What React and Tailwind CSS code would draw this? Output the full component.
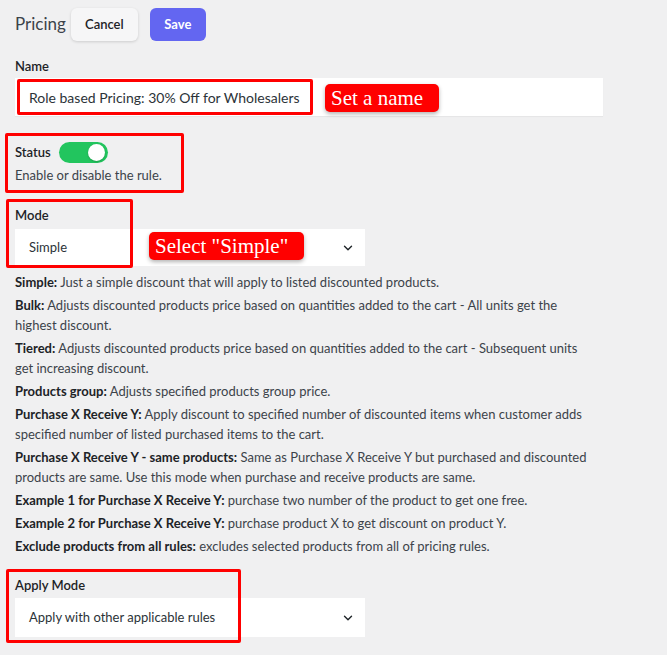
import React from "react";

const Chevron = () => (
  <svg width="14" height="14" viewBox="0 0 24 24" fill="none" stroke="#1d2327" strokeWidth="2.4" strokeLinecap="round" strokeLinejoin="round">
    <path d="M6 9l6 6 6-6" />
  </svg>
);

const Tag = ({ children, className }) => (
  <div className={"absolute bg-[#ff0000] text-white rounded-[5px] shadow-[0_2px_4px_rgba(0,0,0,0.3)] pl-[6px] pr-[16px] text-[21px] leading-[28px] [font-family:'Liberation_Serif',serif] " + className}>
    {children}
  </div>
);

const Box = ({ className }) => (
  <div className={"absolute border-[3px] border-[#ff0000] rounded-[2px] pointer-events-none " + className} />
);

const descs = [
  ["Simple:", " Just a simple discount that will apply to listed discounted products."],
  ["Bulk:", " Adjusts discounted products price based on quantities added to the cart - All units get the highest discount."],
  ["Tiered:", " Adjusts discounted products price based on quantities added to the cart - Subsequent units get increasing discount."],
  ["Products group:", " Adjusts specified products group price."],
  ["Purchase X Receive Y:", " Apply discount to specified number of discounted items when customer adds specified number of listed purchased items to the cart."],
  ["Purchase X Receive Y - same products:", " Same as Purchase X Receive Y but purchased and discounted products are same. Use this mode when purchase and receive products are same."],
  ["Example 1 for Purchase X Receive Y:", " purchase two number of the product to get one free."],
  ["Example 2 for Purchase X Receive Y:", " purchase product X to get discount on product Y."],
  ["Exclude products from all rules:", " excludes selected products from all of pricing rules."],
];

export default function App() {
  return (
    <div className="min-h-[655px] w-[667px] bg-[#f0f0f1] text-[#3c434a] [font-family:Lato,'Liberation_Sans',sans-serif] text-[13px] pl-[15px] pt-[8px] overflow-hidden">
      {/* header */}
      <div className="flex items-center h-[33px]">
        <span className="text-[17px] text-[#3c434a] mr-[5px] -mt-[2px]">Pricing</span>
        <button className="h-[33px] w-[67px] rounded-[6px] bg-[#f6f6f7] shadow-[0_1px_3px_rgba(0,0,0,0.15)] text-[13px] font-semibold text-[#1d2327]">Cancel</button>
        <button className="ml-[12px] h-[33px] w-[56px] rounded-[6px] bg-[#6366f1] text-[13px] font-bold text-white">Save</button>
      </div>

      {/* name */}
      <div className="mt-[16px] font-semibold text-[#1d2327] leading-[18px]">Name</div>
      <div className="relative mt-[3px] w-[588px] h-[38px] bg-white flex items-center pl-[14px] text-[14px] text-[#2c3338] shadow-[0_1px_1px_rgba(0,0,0,0.04)]">
        Role based Pricing: 30% Off for Wholesalers
        <Box className="left-[2px] top-[1px] w-[296px] h-[36px]" />
        <Tag className="left-[310px] top-[6px]">Set a name</Tag>
      </div>

      {/* status */}
      <div className="relative mt-[26px]">
        <div className="flex items-center gap-[8px] h-[21px]">
          <span className="font-semibold text-[#1d2327]">Status</span>
          <div className="relative w-[49px] h-[21px] rounded-full bg-[#22c55e]">
            <div className="absolute right-[3px] top-[2px] w-[17px] h-[17px] rounded-full bg-white shadow-[0_1px_2px_rgba(0,0,0,0.2)]" />
          </div>
        </div>
        <div className="mt-[2px] leading-[20px]">Enable or disable the rule.</div>
        <Box className="-left-[10px] -top-[9px] w-[179px] h-[60px]" />
      </div>

      {/* mode */}
      <div className="relative mt-[21px]">
        <div className="font-semibold text-[#1d2327] leading-[18px]">Mode</div>
        <div className="mt-[5px] w-[350px] h-[37px] bg-white flex items-center justify-between pl-[14px] pr-[10px] text-[#2c3338]">
          <span>Simple</span>
          <Chevron />
        </div>
        <Box className="-left-[9px] -top-[7px] w-[127px] h-[69px]" />
        <Tag className="left-[134px] top-[26px]">Select "Simple"</Tag>
      </div>

      {/* descriptions */}
      <div className="mt-[6px] w-[579px] flex flex-col gap-[3px] leading-[20px]">
        {descs.map(([b, t]) => (
          <p key={b}><b className="font-bold text-[#1d2327]">{b}</b>{t}</p>
        ))}
      </div>

      {/* apply mode */}
      <div className="relative mt-[20px]">
        <div className="font-semibold text-[#1d2327] leading-[18px]">Apply Mode</div>
        <div className="mt-[4px] w-[350px] h-[39px] bg-white flex items-center justify-between pl-[14px] pr-[10px] text-[#2c3338]">
          <span>Apply with other applicable rules</span>
          <Chevron />
        </div>
        <Box className="-left-[9px] -top-[7px] w-[235px] h-[74px]" />
      </div>
    </div>
  );
}
